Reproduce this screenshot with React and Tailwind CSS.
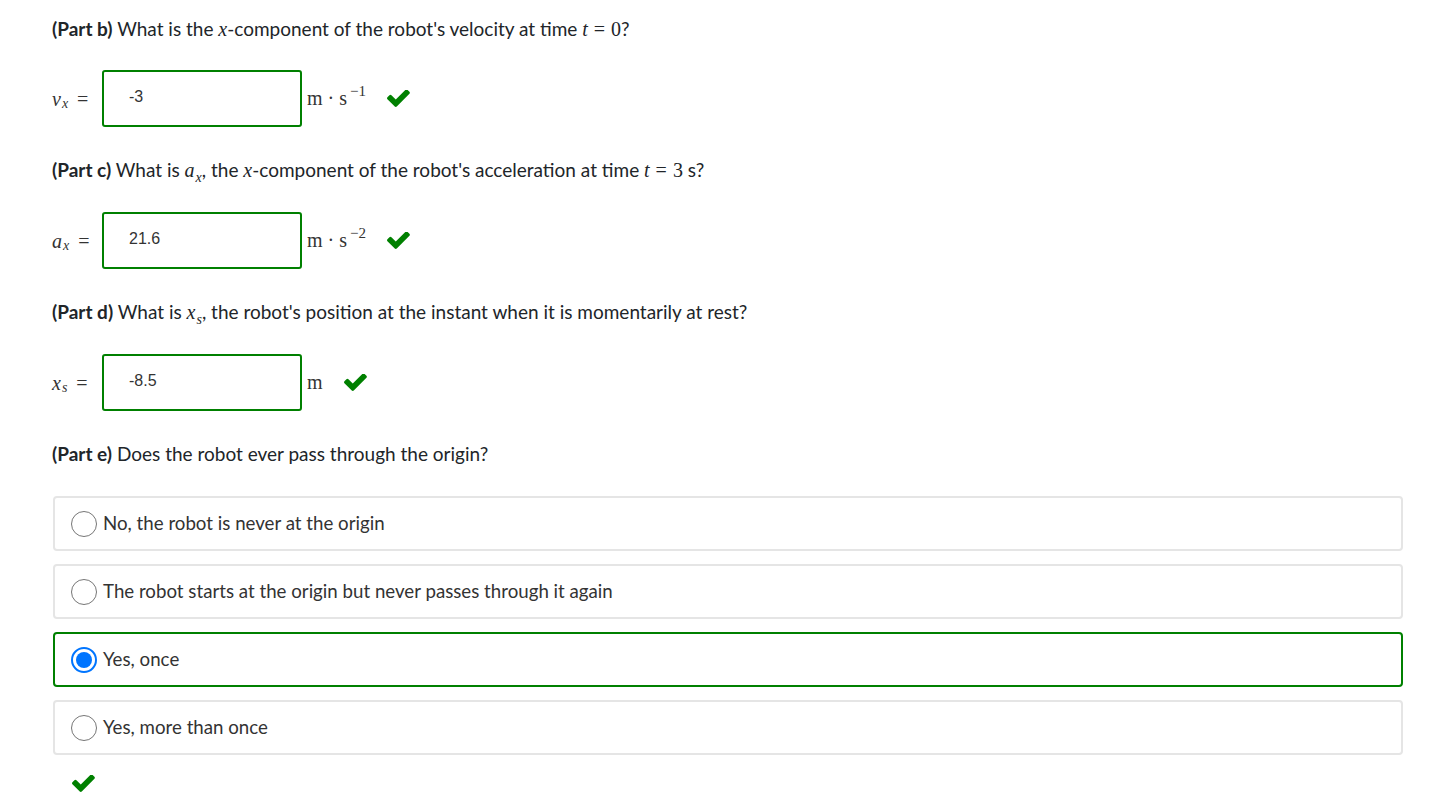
import React from "react";

const sans = "font-['Source_Sans_Pro','Lato',sans-serif]";
const serif = "font-['Liberation_Serif','DejaVu_Serif',serif]";

function Check({ className = "" }) {
  return (
    <svg viewBox="120 400 1560 1100" className={"w-[23px] h-[17px] fill-[#008000] " + className}>
      <path d="M1671 566q0 40-28 68l-724 724-136 136q-28 28-68 28t-68-28l-136-136-362-362q-28-28-28-68t28-68l136-136q28-28 68-28t68 28l294 295 656-657q28-28 68-28t68 28l136 136q28 28 28 68z" />
    </svg>
  );
}

function M({ children }) {
  return <span className={serif + " italic text-[20px] leading-none"}>{children}</span>;
}

function Sub({ children }) {
  return <span className={serif + " italic text-[14px] leading-none relative top-[5px] ml-[1px]"}>{children}</span>;
}

function Eq({ children }) {
  return (
    <span className={serif + " text-[20px] leading-none"}>
      <span className="mx-[6px]">=</span>
      {children}
    </span>
  );
}

function Heading({ part, children }) {
  return (
    <div className="h-[27px] text-[19px] leading-[27px] text-[#212529] whitespace-nowrap">
      <span className="font-bold">(Part {part})</span> {children}
    </div>
  );
}

function AnswerRow({ label, value, unit }) {
  return (
    <div className="flex items-center h-[57px]">
      <div className={serif + " text-[20px] text-[#333] w-[50px] flex items-center"}>{label}</div>
      <div className="w-[200px] h-[57px] border-2 border-[#008000] rounded-[3px] flex items-center pl-[25px] pb-[4px] font-['Liberation_Sans',Arial,sans-serif] text-[16px] text-[#333]">
        {value}
      </div>
      <div className={serif + " text-[20px] text-[#333] ml-[5px] pb-[2px]"}>{unit}</div>
      {/* answer marked correct */}
      <Check className="ml-[21px]" />
    </div>
  );
}

function Radio({ checked }) {
  if (checked) {
    return (
      <span className="w-[26px] h-[26px] rounded-full border-2 border-[#0075ff] bg-white flex items-center justify-center shrink-0">
        <span className="w-[16px] h-[16px] rounded-full bg-[#0075ff]" />
      </span>
    );
  }
  return <span className="w-[26px] h-[26px] rounded-full border-[1.5px] border-[#767676] bg-white shrink-0" />;
}

function Option({ text, checked }) {
  return (
    <div
      className={
        "h-[55px] rounded-[4px] border-2 flex items-center pl-[16px] gap-[6px] " +
        (checked ? "border-[#008000]" : "border-[#e5e5e5]")
      }
    >
      <Radio checked={checked} />
      <span className="text-[18.7px] text-[#333]">{text}</span>
    </div>
  );
}

const sup = (n) => <span className="text-[15px] relative -top-[9px] ml-[3px]">−{n}</span>;

export default function App() {
  return (
    <div className={sans + " bg-white min-h-[809px] pl-[52px] pt-[15px] w-[1403px]"}>
      <Heading part="b">
        What is the <M>x</M>-component of the robot's velocity at time <M>t</M>
        <Eq>0</Eq>?
      </Heading>
      <div className="mt-[28px]">
        <AnswerRow
          label={<><M>v</M><Sub>x</Sub><span className="ml-[9px]">=</span></>}
          value="-3"
          unit={<>m · s{sup(1)}</>}
        />
      </div>

      <div className="mt-[29px]">
        <Heading part="c">
          What is <M>a</M><Sub>x</Sub>, the <M>x</M>-component of the robot's acceleration at time <M>t</M>
          <Eq>3</Eq> s?
        </Heading>
      </div>
      <div className="mt-[29px]">
        <AnswerRow
          label={<><M>a</M><Sub>x</Sub><span className="ml-[9px]">=</span></>}
          value="21.6"
          unit={<>m · s{sup(2)}</>}
        />
      </div>

      <div className="mt-[29px]">
        <Heading part="d">
          What is <M>x</M><Sub>s</Sub>, the robot's position at the instant when it is momentarily at rest?
        </Heading>
      </div>
      <div className="mt-[29px]">
        <AnswerRow
          label={<><M>x</M><Sub>s</Sub><span className="ml-[9px]">=</span></>}
          value="-8.5"
          unit={<>m</>}
        />
      </div>

      <div className="mt-[29px]">
        <Heading part="e">Does the robot ever pass through the origin?</Heading>
      </div>
      <div className="mt-[29px] ml-[1px] flex flex-col gap-[13px]">
        <Option text="No, the robot is never at the origin" />
        <Option text="The robot starts at the origin but never passes through it again" />
        <Option text="Yes, once" checked />
        <Option text="Yes, more than once" />
      </div>
      <Check className="ml-[20px] mt-[20px]" />
    </div>
  );
}
